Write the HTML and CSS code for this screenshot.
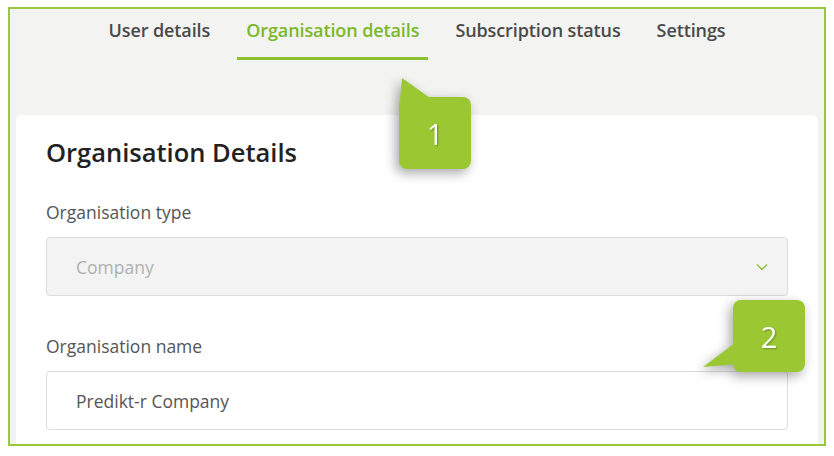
FILE: index.html
```html
<!DOCTYPE html>
<html>
<head>
<meta charset="utf-8">
<link rel="stylesheet" href="styles.css">
</head>
<body>
<div class="frame">
  <nav class="tabs">
    <div class="tab">User details</div>
    <div class="tab active">Organisation details</div>
    <div class="tab">Subscription status</div>
    <div class="tab">Settings</div>
  </nav>
  <section class="card">
    <h1 class="title">Organisation Details</h1>
    <div class="field">
      <label class="label">Organisation type</label>
      <div class="select">
        <span class="select-value">Company</span>
        <svg class="chevron" width="12" height="8" viewBox="0 0 12 8"><path d="M1 1.5 L6 6.5 L11 1.5" fill="none" stroke="#8cc03a" stroke-width="1.4"/></svg>
      </div>
    </div>
    <div class="field">
      <label class="label">Organisation name</label>
      <div class="input">Predikt-r Company</div>
    </div>
  </section>
  <div class="callout callout-1"><span>1</span></div>
  <div class="callout callout-2"><span>2</span></div>
</div>
</body>
</html>
```
FILE: styles.css
```css
html, body {
  margin: 0;
  padding: 0;
  background: #ffffff;
}
body {
  font-family: "Open Sans", "Noto Sans", sans-serif;
}
.frame {
  position: relative;
  margin: 7px 8px 0 8px;
  height: 435px;
  border: 2px solid #99c93a;
  background: #f3f3f2;
  overflow: hidden;
  padding: 0 6px;
}
.tabs {
  display: flex;
  justify-content: center;
  gap: 18px;
  padding-top: 6px;
}
.tab {
  padding: 0 9px;
  height: 42px;
  line-height: 30px;
  font-size: 18px;
  font-weight: 600;
  color: #4a4a4a;
  letter-spacing: -0.1px;
  border-bottom: 3px solid transparent;
}
.tab.active {
  color: #7ab82a;
  border-bottom-color: #8cc030;
}
.card {
  margin-top: 55px;
  background: #ffffff;
  border-radius: 6px;
  padding: 19px 30px 30px 30px;
  height: 400px;
}
.title {
  margin: 0 0 30px 0;
  font-size: 25.5px;
  font-weight: 600;
  color: #222222;
  line-height: 36px;
}
.field {
  display: flex;
  flex-direction: column;
  margin-bottom: 38px;
}
.label {
  font-size: 17.5px;
  color: #555555;
  line-height: 24px;
  margin-bottom: 13px;
}
.select, .input {
  height: 57px;
  border: 1px solid #dcdcdc;
  border-radius: 4px;
  display: flex;
  align-items: center;
  padding: 0 19px 0 29px;
  font-size: 17.5px;
}
.select {
  background: #f3f3f3;
  justify-content: space-between;
}
.select-value {
  color: #b0b0b0;
}
.input {
  background: #ffffff;
  color: #555555;
}
.callout {
  position: absolute;
  width: 72px;
  height: 72px;
  background: #9bc832;
  border-radius: 8px;
  color: #ffffff;
  font-size: 29px;
  display: flex;
  align-items: center;
  justify-content: center;
  filter: drop-shadow(-3px 4px 6px rgba(0,0,0,0.35));
}
.callout span {
  text-shadow: 1px 1px 2px rgba(0,0,0,0.3);
}
.callout::before {
  content: "";
  position: absolute;
  background: #9bc832;
}
.callout-1 {
  left: 389px;
  top: 88px;
}
.callout-1::before {
  left: 0;
  top: -19px;
  width: 34px;
  height: 24px;
  clip-path: polygon(3px 0, 1px 22px, 34px 22px);
}
.callout-2 {
  left: 723px;
  top: 291px;
}
.callout-2::before {
  left: -30px;
  top: 40px;
  width: 36px;
  height: 28px;
  clip-path: polygon(0 27px, 36px 0, 36px 24px);
}
```
